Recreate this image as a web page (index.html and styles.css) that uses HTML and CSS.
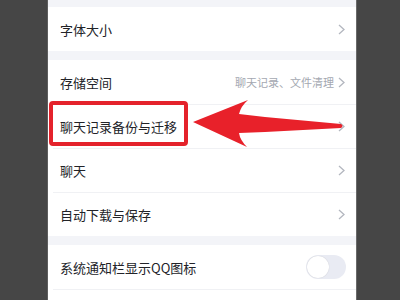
FILE: index.html
```html
<!DOCTYPE html>
<html lang="zh">
<head>
<meta charset="utf-8">
<link rel="stylesheet" href="styles.css">
</head>
<body>
<div class="stage">
  <div class="phone">
    <div class="group">
      <div class="row"><span class="label">字体大小</span><svg class="chev" viewBox="0 0 7 11"><path d="M1 1l5 4.5L1 10"/></svg></div>
    </div>
    <div class="group">
      <div class="row"><span class="label">存储空间</span><span class="right"><span class="sub">聊天记录、文件清理</span><svg class="chev" viewBox="0 0 7 11"><path d="M1 1l5 4.5L1 10"/></svg></span></div>
      <div class="row"><span class="label">聊天记录备份与迁移</span><svg class="chev" viewBox="0 0 7 11"><path d="M1 1l5 4.5L1 10"/></svg></div>
      <div class="row"><span class="label">聊天</span><svg class="chev" viewBox="0 0 7 11"><path d="M1 1l5 4.5L1 10"/></svg></div>
      <div class="row"><span class="label">自动下载与保存</span><svg class="chev" viewBox="0 0 7 11"><path d="M1 1l5 4.5L1 10"/></svg></div>
    </div>
    <div class="group">
      <div class="row"><span class="label">系统通知栏显示QQ图标</span><span class="toggle"><span class="knob"></span></span></div>
      <div class="row"><span class="label"></span><span class="toggle"><span class="knob"></span></span></div>
    </div>
  </div>
  <div class="highlight"></div>
  <svg class="arrow" width="400" height="300" viewBox="0 0 400 300">
    <path d="M193 122 L248 100 Q241 106 239 114 L265 117 L341 124 Q344 126 341 128 L265 132 L239 133 Q240 140 247 147 Z"/>
  </svg>
</div>
</body>
</html>
```
FILE: styles.css
```css
html, body {
  margin: 0;
  padding: 0;
  height: 300px;
  overflow: hidden;
  background: #464646;
}
.stage {
  position: relative;
  width: 400px;
  height: 300px;
}
.phone {
  margin-left: 47px;
  width: 308px;
  height: 300px;
  border-left: 1px solid #5e5e5e;
  border-right: 1px solid #6a6a6a;
  background: #f3f4f8;
  padding-top: 7px;
  display: flex;
  flex-direction: column;
  gap: 9px;
  overflow: hidden;
  font-family: "Noto Sans CJK SC", "Noto Sans", sans-serif;
}
.group {
  background: #ffffff;
}
.row {
  height: 44px;
  box-sizing: border-box;
  margin-left: 5px;
  padding-left: 7px;
  padding-right: 11px;
  display: flex;
  align-items: center;
  justify-content: space-between;
}
.row + .row {
  border-top: 1px solid #f0f1f4;
}
.label {
  font-size: 13px;
  color: #222328;
}
.right {
  display: flex;
  align-items: center;
  gap: 4px;
}
.sub {
  font-size: 11px;
  color: #a4a8b1;
}
.chev {
  width: 7px;
  height: 11px;
  fill: none;
  stroke: #b3b7bf;
  stroke-width: 1.3;
}
.toggle {
  width: 40px;
  height: 24px;
  border-radius: 12px;
  background: #e9ebf3;
  margin-right: -1px;
  display: flex;
  align-items: center;
  padding-left: 1px;
  box-sizing: border-box;
}
.knob {
  width: 22px;
  height: 22px;
  border-radius: 50%;
  background: #ffffff;
  box-shadow: 0 0 1px rgba(0,0,0,0.2);
}
.highlight {
  position: absolute;
  left: 49px;
  top: 101px;
  width: 139px;
  height: 45px;
  box-sizing: border-box;
  border: 4px solid #e4222b;
  border-radius: 4px;
}
.arrow {
  position: absolute;
  left: 0;
  top: 0;
}
.arrow path {
  fill: #e8212a;
}
```
